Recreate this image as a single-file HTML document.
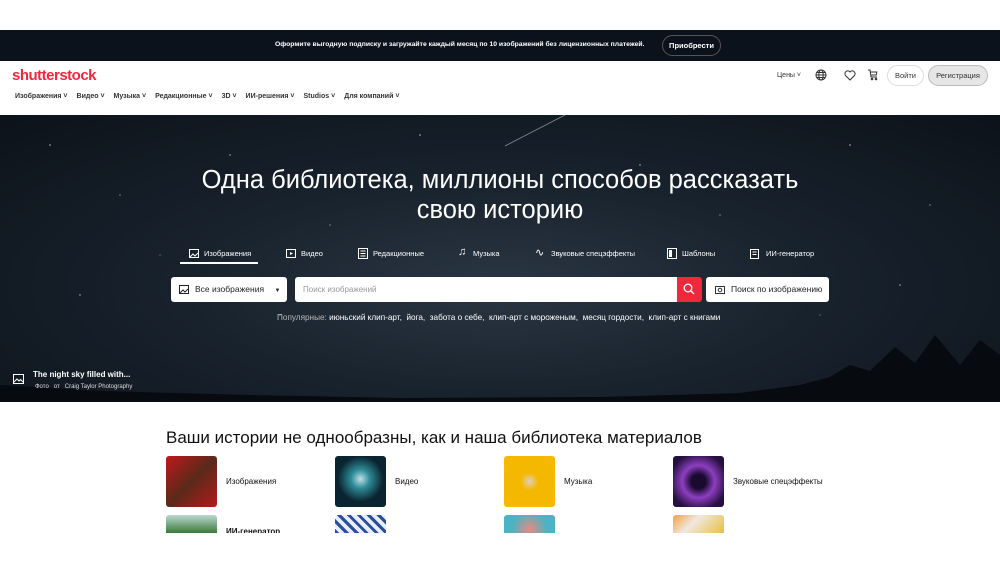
<!DOCTYPE html>
<html><head><meta charset="utf-8"><style>
*{margin:0;padding:0;box-sizing:border-box}
html,body{width:1000px;height:563px;overflow:hidden}
body{background:#fff;font-family:"Liberation Sans",sans-serif;position:relative}
.ab{position:absolute}
.banner{top:30px;left:0;width:1000px;height:31px;background:#0c121c;color:#fff;font-size:6.8px;font-weight:bold}
.hero{top:115px;left:0;width:1000px;height:287px;background:radial-gradient(ellipse at 50% 60%,#2a3642 0%,#18222d 45%,#0c1219 100%);overflow:hidden}
.nav span{margin-right:9px}
.tab{color:#fff;font-size:7.5px;position:absolute;top:249px}
.cat{position:absolute;font-size:8px;color:#111}
.th{position:absolute;width:51px;height:51px;border-radius:3px}
</style></head><body>
<div class="ab banner">
<div class="ab" style="left:275px;top:11px;white-space:nowrap">Оформите выгодную подписку и загружайте каждый месяц по 10 изображений без лицензионных платежей.</div>
<div class="ab" style="left:662px;top:5px;width:59px;height:21px;border:1px solid #555;border-radius:11px;text-align:center;line-height:19px;font-size:7.5px">Приобрести</div>
</div>
<div class="ab" style="left:12px;top:67px;color:#f0283c;font-size:15px;font-weight:bold;letter-spacing:-0.5px">shutterstock</div>
<div class="ab nav" style="left:15px;top:93px;font-size:7px;color:#333;font-weight:bold">
<span>Изображения ˅</span><span>Видео ˅</span><span>Музыка ˅</span><span>Редакционные ˅</span><span>3D ˅</span><span>ИИ-решения ˅</span><span>Studios ˅</span><span>Для компаний ˅</span></div>
<div class="ab" style="left:777px;top:72px;font-size:7px;color:#333">Цены ˅</div>
<svg class="ab" style="left:815px;top:69px" width="12" height="12" viewBox="0 0 12 12" fill="none" stroke="#333" stroke-width="1"><circle cx="6" cy="6" r="5"/><ellipse cx="6" cy="6" rx="2.2" ry="5"/><path d="M1 6h10M2 3.5h8M2 8.5h8"/></svg>
<svg class="ab" style="left:844px;top:70px" width="12" height="11" viewBox="0 0 12 11" fill="none" stroke="#333" stroke-width="1"><path d="M6 10L1.5 5.5A2.6 2.6 0 016 2a2.6 2.6 0 014.5 3.5z"/></svg>
<svg class="ab" style="left:867px;top:69px" width="11" height="12" viewBox="0 0 11 12" fill="none" stroke="#333" stroke-width="1"><path d="M1 1h2l1 7h6M3.3 3h6.5l-.5 3H4"/><circle cx="5" cy="10" r=".8"/><circle cx="9" cy="10" r=".8"/></svg>
<div class="ab" style="left:887px;top:65px;width:37px;height:21px;border:1px solid #ddd;border-radius:11px;font-size:7.5px;color:#333;text-align:center;line-height:19px">Войти</div>
<div class="ab" style="left:928px;top:65px;width:60px;height:21px;border:1px solid #bbb;background:#e6e6e6;border-radius:11px;font-size:7.5px;color:#333;text-align:center;line-height:19px">Регистрация</div>
<div class="ab hero">
<svg width="1000" height="287" style="position:absolute;left:0;top:0">
<g fill="#fff" opacity=".7"><circle cx="50" cy="30" r=".8"/><circle cx="120" cy="80" r=".6"/><circle cx="230" cy="40" r=".7"/><circle cx="330" cy="110" r=".6"/><circle cx="420" cy="20" r=".8"/><circle cx="640" cy="50" r=".7"/><circle cx="720" cy="100" r=".6"/><circle cx="850" cy="30" r=".8"/><circle cx="930" cy="90" r=".6"/><circle cx="80" cy="180" r=".7"/><circle cx="900" cy="170" r=".7"/><circle cx="160" cy="140" r=".5"/><circle cx="820" cy="200" r=".5"/><circle cx="560" cy="140" r=".6"/><circle cx="280" cy="200" r=".6"/></g>
<path d="M505 31L565 0" stroke="#cde" stroke-width=".8" opacity=".6"/>
<path d="M0 287L0 270 100 276 250 280 400 283 600 282 740 278 800 270 830 262 850 250 870 256 895 232 915 248 935 220 960 250 980 225 1000 240 1000 287z" fill="#070a0e"/>
</svg>
<div class="ab" style="left:0;width:1000px;top:50px;text-align:center;color:#fff;font-size:25.5px;line-height:30px">Одна библиотека, миллионы способов рассказать<br>свою историю</div>
<div class="ab" style="left:33px;top:255px;color:#fff;font-size:8px;font-weight:bold">The night sky filled with...</div>
<div class="ab" style="left:35px;top:269px;color:#ddd;font-size:6px">Фото &nbsp; от &nbsp; Craig Taylor Photography</div>
<svg class="ab" style="left:13px;top:259px" width="11" height="10" viewBox="0 0 11 10" fill="none" stroke="#fff"><rect x=".5" y=".5" width="10" height="9"/><path d="M1 8l3-3 2 2 1.5-1.5L10 8"/></svg>
</div>
<div class="tab" style="left:204px">Изображения</div>
<div class="ab" style="left:180px;top:262px;width:78px;height:2px;background:#fff"></div>
<div class="tab" style="left:301px">Видео</div>
<div class="tab" style="left:373px">Редакционные</div>
<div class="tab" style="left:473px">Музыка</div>
<div class="tab" style="left:551px">Звуковые спецэффекты</div>
<div class="tab" style="left:682px">Шаблоны</div>
<div class="tab" style="left:766px">ИИ-генератор</div>
<svg class="ab" style="left:189px;top:249px" width="10" height="9"><rect x=".5" y=".5" width="9" height="8" fill="none" stroke="#fff"/><path d="M1 8l3-3 2 2 3-3" stroke="#fff" fill="none"/></svg>
<svg class="ab" style="left:286px;top:249px" width="10" height="9"><rect x=".5" y=".5" width="9" height="8" fill="none" stroke="#fff"/><path d="M4 3l3 1.5L4 6z" fill="#fff"/></svg>
<svg class="ab" style="left:358px;top:248px" width="10" height="11"><rect x=".5" y=".5" width="9" height="10" fill="none" stroke="#fff"/><path d="M2.5 3h5M2.5 5.5h5M2.5 8h5" stroke="#fff"/></svg>
<div class="ab" style="left:458px;top:246px;color:#fff;font-size:11px">♫</div>
<div class="ab" style="left:535px;top:246px;color:#fff;font-size:11px">∿</div>
<svg class="ab" style="left:667px;top:248px" width="10" height="11"><rect x=".5" y=".5" width="9" height="10" fill="none" stroke="#fff"/><rect x="2" y="2" width="3" height="7" fill="#fff"/></svg>
<svg class="ab" style="left:750px;top:248px" width="11" height="11"><rect x=".5" y="1.5" width="8" height="9" fill="none" stroke="#fff"/><path d="M2.5 4h4M2.5 6.5h4" stroke="#fff"/></svg>
<div class="ab" style="left:171px;top:277px;width:116px;height:25px;background:#fff;border-radius:3px;font-size:8.5px;color:#222;line-height:25px;padding-left:24px">Все изображения <span style="margin-left:8px;font-size:6px">▼</span></div>
<svg class="ab" style="left:179px;top:285px" width="10" height="9"><rect x=".5" y=".5" width="9" height="8" fill="none" stroke="#222"/><path d="M1 8l3-3 2 2 3-3" stroke="#222" fill="none"/></svg>
<div class="ab" style="left:295px;top:277px;width:382px;height:25px;background:#fff;border-radius:3px 0 0 3px;font-size:8px;color:#999;line-height:25px;padding-left:8px">Поиск изображений</div>
<div class="ab" style="left:677px;top:277px;width:25px;height:25px;background:#f0283c;border-radius:0 3px 3px 0"></div>
<svg class="ab" style="left:683px;top:283px" width="12" height="12" fill="none" stroke="#fff" stroke-width="1.3"><circle cx="5" cy="5" r="3.8"/><path d="M8 8l3 3"/></svg>
<div class="ab" style="left:706px;top:277px;width:123px;height:25px;background:#fff;border-radius:3px;font-size:8.5px;color:#222;line-height:25px;padding-left:25px">Поиск по изображению</div>
<svg class="ab" style="left:715px;top:284px" width="11" height="10" fill="none" stroke="#333"><rect x=".5" y="2.5" width="9" height="7"/><circle cx="5" cy="6" r="1.8"/></svg>
<div class="ab" style="left:277px;top:313px;font-size:8.2px;color:#fff;white-space:nowrap"><span style="color:#bbb">Популярные:</span> июньский клип-арт, &nbsp;йога, &nbsp;забота о себе, &nbsp;клип-арт с мороженым, &nbsp;месяц гордости, &nbsp;клип-арт с книгами</div>
<div class="ab" style="left:166px;top:428px;font-size:17px;color:#111">Ваши истории не однообразны, как и наша библиотека материалов</div>
<div class="th" style="left:166px;top:456px;background:linear-gradient(135deg,#c0181c,#5a2a1a 50%,#b51a1a)"></div>
<div class="th" style="left:335px;top:456px;background:radial-gradient(circle at 50% 45%,#bfe0e8 0,#2d8a96 25%,#0b2530 60%)"></div>
<div class="th" style="left:504px;top:456px;background:radial-gradient(ellipse at 50% 50%,#e0d0c0 0,#f4b800 25%,#f6b900 100%)"></div>
<div class="th" style="left:673px;top:456px;background:radial-gradient(circle,#1a0a30 20%,#8d3ec0 45%,#251040 80%)"></div>
<div class="cat" style="left:226px;top:477px">Изображения</div>
<div class="cat" style="left:395px;top:477px">Видео</div>
<div class="cat" style="left:564px;top:477px">Музыка</div>
<div class="cat" style="left:733px;top:477px">Звуковые спецэффекты</div>
<div class="th" style="left:166px;top:515px;height:18px;border-radius:3px 3px 0 0;background:linear-gradient(#bcd8d0,#3b7a3a)"></div>
<div class="th" style="left:335px;top:515px;height:18px;border-radius:3px 3px 0 0;background:repeating-linear-gradient(45deg,#2b4d9a 0 3px,#e8eef8 3px 7px)"></div>
<div class="th" style="left:504px;top:515px;height:18px;border-radius:3px 3px 0 0;background:radial-gradient(circle at 50% 80%,#e88a80,#4ab3c4 60%)"></div>
<div class="th" style="left:673px;top:515px;height:18px;border-radius:3px 3px 0 0;background:linear-gradient(135deg,#f5a040,#f0e8e0 40%,#e8c040)"></div>
<div class="ab" style="left:226px;top:528px;width:60px;height:5px;overflow:hidden"><div style="font-size:8px;font-weight:bold;color:#111;position:absolute;top:-1px">ИИ-генератор</div></div>
</body></html>
